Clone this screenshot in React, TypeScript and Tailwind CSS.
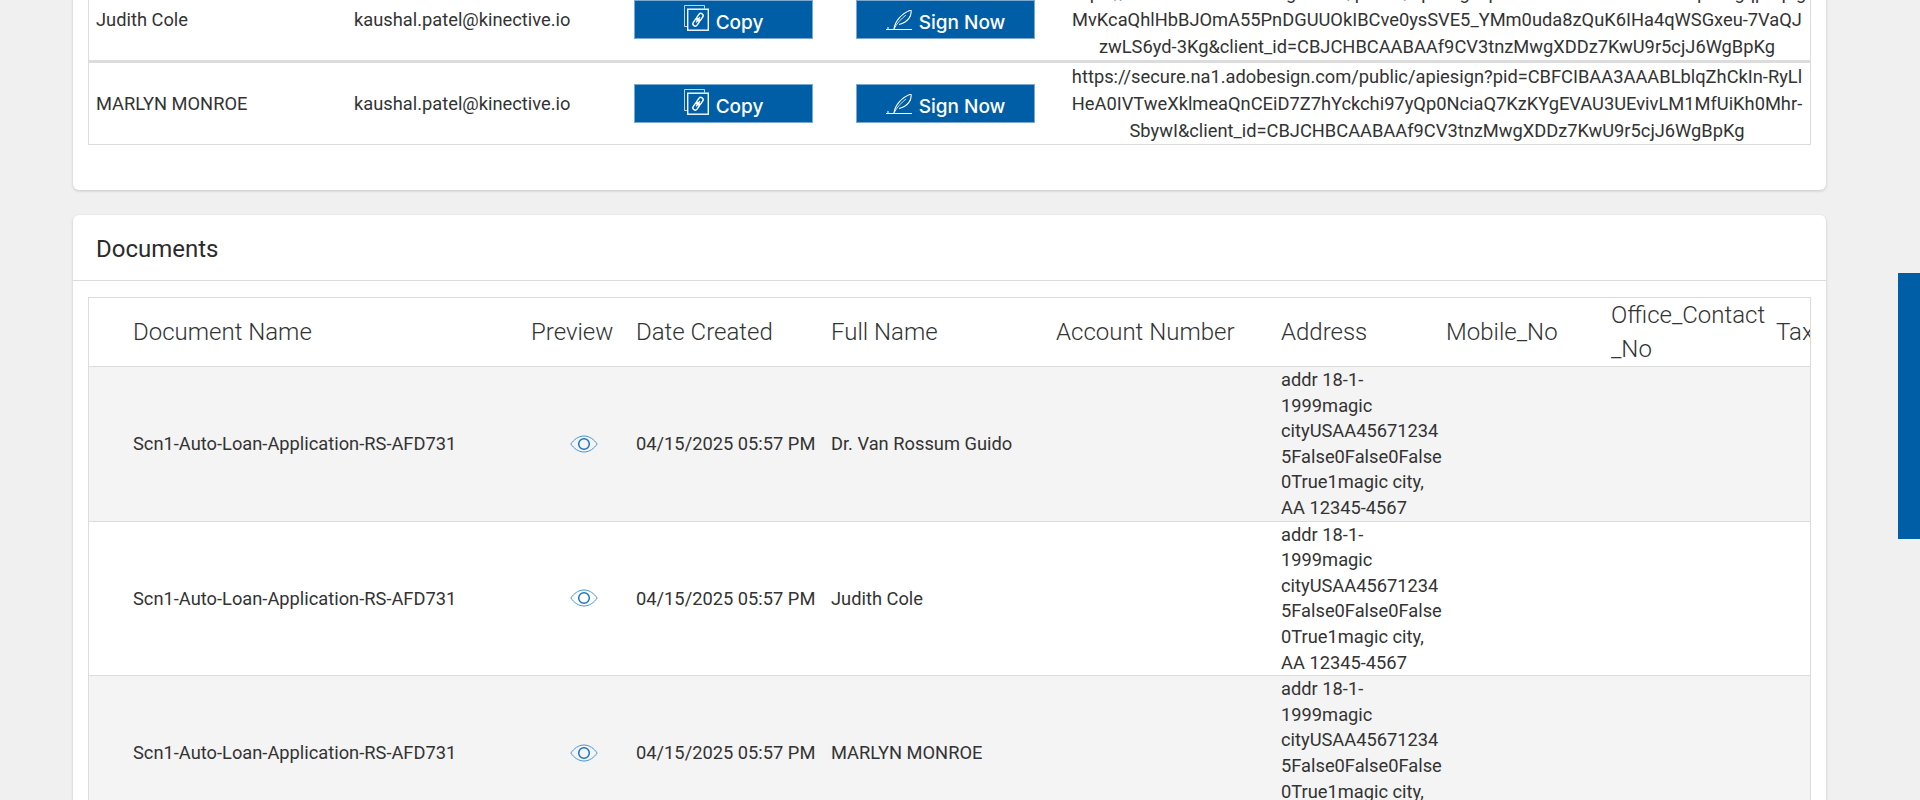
const signers = [
  {
    name: "Judith Cole",
    lines: [
      "https://secure.na1.adobesign.com/public/apiesign?pid=CBFCIBAA3AAABLblqZhCgqpJqEg",
      "MvKcaQhlHbBJOmA55PnDGUUOkIBCve0ysSVE5_YMm0uda8zQuK6IHa4qWSGxeu-7VaQJ",
      "zwLS6yd-3Kg&client_id=CBJCHBCAABAAf9CV3tnzMwgXDDz7KwU9r5cjJ6WgBpKg",
    ],
  },
  {
    name: "MARLYN MONROE",
    lines: [
      "https://secure.na1.adobesign.com/public/apiesign?pid=CBFCIBAA3AAABLblqZhCkIn-RyLl",
      "HeA0IVTweXklmeaQnCEiD7Z7hYckchi97yQp0NciaQ7KzKYgEVAU3UEvivLM1MfUiKh0Mhr-",
      "SbywI&client_id=CBJCHBCAABAAf9CV3tnzMwgXDDz7KwU9r5cjJ6WgBpKg",
    ],
  },
];

const documents = ["Dr. Van Rossum Guido", "Judith Cole", "MARLYN MONROE"];

const addressLines = [
  "addr 18-1-",
  "1999magic",
  "cityUSAA45671234",
  "5False0False0False",
  "0True1magic city,",
  "AA 12345-4567",
];

function CopyIcon() {
  return (
    <svg width="25" height="26" viewBox="0 0 25 26" fill="none" stroke="#fff" className="mb-[3px] shrink-0">
      <path d="M3.500 21.500H.5V.5h20v3" strokeWidth="1" opacity="0.75" />
      <rect x="3.700" y="4.200" width="20.600" height="21" strokeWidth="1.400" />
      <g transform="rotate(35 14 14.700)" strokeWidth="1.400">
        <rect x="11.700" y="7.500" width="4.600" height="8" rx="2.300" />
        <rect x="11.700" y="13.900" width="4.600" height="8" rx="2.300" />
        <path d="M14 11.500v6.400" />
      </g>
    </svg>
  );
}

function SignIcon() {
  return (
    <svg width="26" height="20" viewBox="0 0 26 20" fill="none" stroke="#fff" className="shrink-0">
      <path d="M0 19.500h26" strokeWidth="1" />
      <path d="M1 18h2" strokeWidth="1.200" />
      <path d="M8 19C9 11 16 3 25 0c1 6-3 12-12 14.500" strokeWidth="1.100" />
      <path d="M8 19c3-6 7-10 12-14" strokeWidth="0.800" />
    </svg>
  );
}

function EyeIcon() {
  return (
    <svg width="28" height="18" viewBox="0 0 28 18" fill="none" className="shrink-0">
      <path d="M.8 9C4 4.500 8.500 1 14 1s10 3.500 13.200 8C24 13.500 19.500 17 14 17S4 13.500.8 9z" stroke="#4a97cf" strokeWidth="1" />
      <circle cx="14" cy="9" r="5.300" stroke="#1c75bc" strokeWidth="1.500" />
    </svg>
  );
}

function ActionButton({ icon, label }: { icon: React.ReactNode; label: string }) {
  return (
    <button className="flex h-[39px] w-[179px] items-center justify-center gap-[7px] border border-[#7aa9d2] bg-[#005ea6] font-['Inter'] text-[19px] font-medium text-white">
      {icon}
      <span className="mt-[8px]">{label}</span>
    </button>
  );
}

export default function App() {
  return (
    <div className="relative h-[800px] overflow-hidden bg-[#f0f0f0] font-['Roboto',sans-serif] text-[18.3px] text-[#333333]">
      <div className="absolute top-[273px] right-0 h-[266px] w-[22px] bg-[#005ea6]" />

      <div className="ml-[73px] w-[1753px]">
        {/* signers, scrolled past the top of the window */}
        <section className="-mt-[21px] rounded-b-md bg-white px-[15px] pb-[45px] shadow-[0_1px_3px_rgba(0,0,0,0.18)]">
          <div className="border-x border-b border-[#dcdcdc]">
            {signers.map((signer, index) => (
              <div
                key={signer.name}
                className={`flex items-center ${index === 0 ? "border-b-[3px] border-[#dcdcdc]" : ""}`}
              >
                <div className="w-[265px] shrink-0 pl-[7px]">{signer.name}</div>
                <div className="w-[280px] shrink-0">kaushal.patel@kinective.io</div>
                <div className="w-[222px] shrink-0">
                  <ActionButton icon={<CopyIcon />} label="Copy" />
                </div>
                <div className="w-[208px] shrink-0">
                  <ActionButton icon={<SignIcon />} label="Sign Now" />
                </div>
                <div className="min-w-0 flex-1 text-center leading-[27px]">
                  {signer.lines.map((line) => (
                    <div key={line} className="whitespace-nowrap">
                      {line}
                    </div>
                  ))}
                </div>
              </div>
            ))}
          </div>
        </section>

        <section className="mt-[25px] rounded-t-md bg-white px-[15px] shadow-[0_1px_3px_rgba(0,0,0,0.18)]">
          <div className="-mx-[15px] flex h-[66px] items-center border-b border-[#dcdcdc] pt-[3px] pl-[23px] text-[24px] text-[#2b2b2b]">
            Documents
          </div>

          <div className="mt-[16px] overflow-hidden border-x border-t border-[#dcdcdc]">
            <div className="flex h-[69px] w-[1800px] items-center border-b border-[#dcdcdc] text-[24px] leading-[34px] font-light">
              <div className="w-[442px] shrink-0 pl-[44px]">Document Name</div>
              <div className="w-[105px] shrink-0">Preview</div>
              <div className="w-[195px] shrink-0">Date Created</div>
              <div className="w-[225px] shrink-0">Full Name</div>
              <div className="w-[225px] shrink-0">Account Number</div>
              <div className="w-[165px] shrink-0">Address</div>
              <div className="w-[165px] shrink-0">Mobile_No</div>
              <div className="w-[165px] shrink-0 whitespace-nowrap">
                Office_Contact
                <br />_No
              </div>
              <div>Tax</div>
            </div>

            {documents.map((fullName, index) => (
              <div
                key={fullName}
                className={`flex w-[1800px] items-center border-b border-[#dcdcdc] leading-[25.6px] ${index % 2 === 0 ? "bg-[#f4f4f4]" : "bg-white"}`}
              >
                <div className="w-[442px] shrink-0 pl-[44px]">Scn1-Auto-Loan-Application-RS-AFD731</div>
                <div className="flex w-[105px] shrink-0 justify-center">
                  <EyeIcon />
                </div>
                <div className="w-[195px] shrink-0">04/15/2025 05:57 PM</div>
                <div className="w-[225px] shrink-0">{fullName}</div>
                <div className="w-[225px] shrink-0" />
                <div className="w-[165px] shrink-0 whitespace-nowrap">
                  {addressLines.map((line) => (
                    <div key={line}>{line}</div>
                  ))}
                </div>
              </div>
            ))}
          </div>
        </section>
      </div>
    </div>
  );
}
